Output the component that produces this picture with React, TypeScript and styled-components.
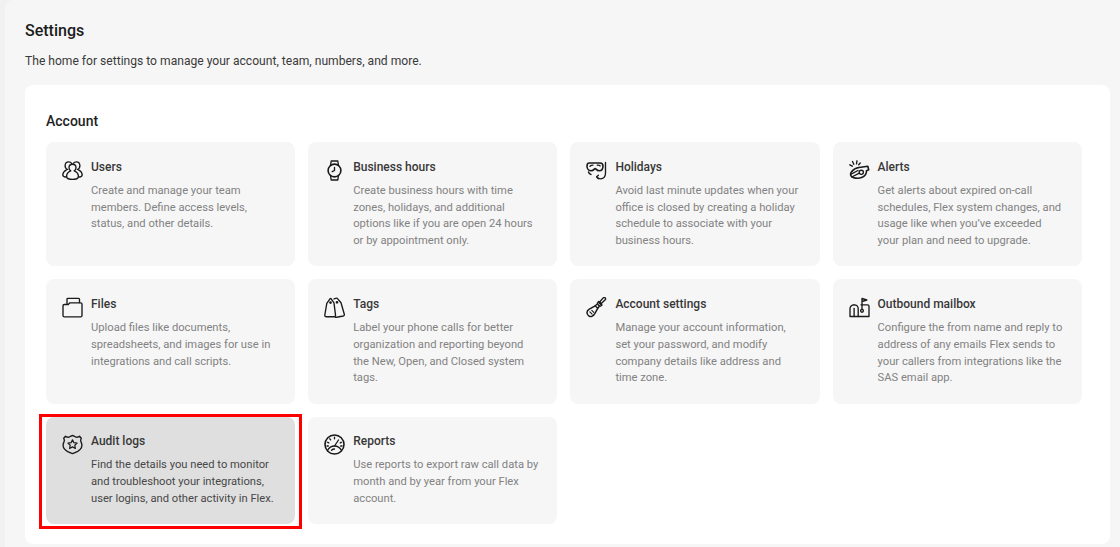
import React from "react";
import styled, { createGlobalStyle } from "styled-components";

const GlobalStyle = createGlobalStyle`
  html, body {
    margin: 0;
    padding: 0;
    background: #f1f1f1;
    overflow: hidden;
  }
  * {
    box-sizing: border-box;
  }
`;

const Panel = styled.main`
  width: 1120px;
  height: 547px;
  margin-left: 5px;
  padding: 21px 10px 0 20px;
  background: #f6f6f6;
  border-top-left-radius: 8px;
  font-family: Roboto, "Liberation Sans", sans-serif;
  overflow: hidden;
`;

const Title = styled.h1`
  margin: 0;
  font-size: 16px;
  line-height: 19px;
  font-weight: 500;
  color: #1c1c1c;
`;

const Subtitle = styled.p`
  margin: 13px 0 0;
  font-size: 12.1px;
  line-height: 17px;
  color: #3a3a3a;
`;

const Section = styled.section`
  width: 1085px;
  height: 459px;
  margin-top: 15px;
  padding: 28px 28px 0 21px;
  background: #fff;
  border-radius: 8px;
`;

const SectionTitle = styled.h2`
  margin: 0 0 12px;
  font-size: 14px;
  line-height: 17px;
  font-weight: 500;
  color: #1f1f1f;
`;

const CardGrid = styled.div`
  display: grid;
  grid-template-columns: repeat(4, 249.2px);
  grid-template-rows: 124.3px 124.3px 107px;
  column-gap: 13px;
  row-gap: 13px;
`;

const Card = styled.article<{ $selected?: boolean }>`
  position: relative;
  display: flex;
  gap: 8px;
  padding: 16.5px 16px 0;
  border-radius: 8px;
  background: ${(p) => (p.$selected ? "#dfdfdf" : "#f6f6f6")};
`;

const Highlight = styled.div`
  position: absolute;
  top: -3px;
  left: -7px;
  right: -7px;
  bottom: -5px;
  border: 3px solid #ff0000;
  pointer-events: none;
`;

const IconSlot = styled.div`
  flex: 0 0 21px;
  width: 21px;
  height: 21px;
  margin-top: 1px;
  color: #1a1a1a;
`;

const Body = styled.div`
  flex: 1;
`;

const CardTitle = styled.h3`
  margin: 0 0 7.3px;
  font-size: 12px;
  line-height: 17px;
  font-weight: 500;
  color: #383838;
`;

const CardText = styled.p<{ $selected?: boolean }>`
  margin: 0;
  font-size: 11.2px;
  line-height: 16.8px;
  white-space: nowrap;
  color: ${(p) => (p.$selected ? "#474747" : "#828282")};
`;

const Svg = styled.svg`
  display: block;
  width: 21px;
  height: 21px;
  fill: none;
  stroke: currentColor;
  stroke-width: 1.35;
  stroke-linecap: round;
  stroke-linejoin: round;
`;

const UsersIcon = () => (
  <Svg viewBox="0 0 21 21">
    <path d="M5.700 9.500C4 8.800 3 7.300 3.100 5.500 3.200 3.300 4.700 1.800 6.700 1.800c1.200 0 2.300.6 3 1.600" />
    <path d="M15.300 9.500c1.700-.7 2.700-2.200 2.600-4-.1-2.200-1.600-3.700-3.600-3.700-1.200 0-2.300.6-3 1.600" />
    <path d="M4.500 9.800C2.500 10.800 1 12.600.8 14.500c-.1 1.500.9 2.300 3 2.500" />
    <path d="M16.500 9.800c2 1 3.500 2.800 3.700 4.700.1 1.500-.9 2.300-3 2.500" />
    <path d="M10.500 4.200C8.500 4.200 7 5.700 7 7.700c0 1.300.7 2.500 1.800 3.100-2.300.9-4 2.900-4.200 5.100-.2 1.700.7 2.800 2.400 3.100 2.300.4 4.700.4 7 0 1.700-.3 2.600-1.400 2.400-3.100-.2-2.200-1.900-4.200-4.200-5.100 1.100-.6 1.800-1.800 1.800-3.100 0-2-1.500-3.500-3.500-3.500z" />
  </Svg>
);

const WatchIcon = () => (
  <Svg viewBox="0 0 21 21">
    <circle cx="10.500" cy="10.500" r="6.400" strokeWidth="1.600" />
    <path d="M6.500 5.500 7.200 1h6.600l.7 4.500" />
    <path d="M6.500 15.500l.7 4.500h6.600l.7-4.500" />
    <path d="M10.500 7.500v3l-2.300 1.200" />
  </Svg>
);

const GogglesIcon = () => (
  <Svg viewBox="0 0 21 21">
    <path d="M3.200 3h10.800c2 0 3 1.300 3 3 0 2.700-1.500 4.800-3.800 4.800-1.500 0-2.300-.7-3.200-1.700-.5-.5-1.100-.5-1.600 0-1 1-1.800 1.700-3.300 1.700C2.900 10.800 1 8.800 1 6.200 1 4.500 1.800 3 3.200 3z" strokeWidth="1.600" />
    <path d="M4 6.300c.8-.9 1.800-1.200 3-1.200M11.300 5.200c1.200-.2 2.200 0 2.900.7" />
    <path d="M19.500 2.500v10.800c0 3.200-2 5.500-4.800 5.500-1.800 0-3-.7-4-2" />
    <path d="M2.500 12c.3 1.300 1.300 2.300 2.500 2.500" />
    <path d="M10.700 16.800l1.700-1.600M10.700 16.800l1.500 1.900" />
  </Svg>
);

const WhistleIcon = () => (
  <Svg viewBox="0 0 21 21">
    <path d="M2.500 11.800c1.800-2.300 4.500-3.900 7.500-4.300l8.800-1.200.9 3.500-2.200 1c0 3-1.500 5.400-4.200 6.500-2.900 1.200-6.300 1.300-9.200.2-2.900-1.100-3.200-3.700-1.600-5.700z" strokeWidth="1.600" />
    <circle cx="12.300" cy="12.300" r="2.100" />
    <path d="M1.600 14.300l7.400-3.800M2.800 17l7.500-3.800" />
    <path d="M3.500 1.500l1.300 2.800M8 .8l-.5 3M.8 4.800l2.500 1.400M11.200 3L9.700 4.800" />
  </Svg>
);

const FolderIcon = () => (
  <Svg viewBox="0 0 21 21">
    <path d="M1 18.500V8.800c0-.8.500-1.300 1.300-1.300h3.900l1.700-1.700h10.800c.7 0 1.300.5 1.300 1.200v11.500c0 .8-.5 1.300-1.300 1.300H2.300C1.500 19.800 1 19.300 1 18.500z" />
    <path d="M5 7V2.200c0-.6.300-.9.900-.9h10.700c.6 0 .9.300.9.900v3.300" />
  </Svg>
);

const TagsIcon = () => (
  <Svg viewBox="0 0 21 21">
    <path d="M.8 18 2.800 6.300 6 1.800c.4-.4.900-.4 1.200 0l2.800 4L11.500 18.200c.1.900-.4 1.500-1.200 1.500H2.300c-1 0-1.600-.7-1.500-1.700z" />
    <path d="M10 1.800l2.500-.6c.4-.1.700 0 1 .4l3.500 4.200 3.300 11.500c.2.900-.2 1.500-1 1.700l-7.800 1.500" />
    <circle cx="6.500" cy="5.500" r=".7" />
    <circle cx="13" cy="5.300" r=".7" />
  </Svg>
);

const ScrewdriverIcon = () => (
  <Svg viewBox="0 0 21 21">
    <path d="M14.500 7.200 19.200 2.800c.7-.7.500-1.400-.1-2-.6-.5-1.200-.5-1.900.1L13 5.700z" />
    <path d="M12.500 4.500c1.500.6 2.800 1.900 3.500 3.500l-1.500 1.200C13 9 11.800 7.800 11.400 6.200z" />
    <path d="M11 7.200 9.200 8.800l2.500 2.500 1.500-1.800" />
    <path d="M9.200 8.800 3.300 12.200c-1.900 1.100-2.700 2.600-2.100 4.400.6 2 2.800 3.500 4.700 2.800 1.300-.5 2.200-1.600 2.900-2.800l2.900-5.300" strokeWidth="1.500" />
    <path d="M3.800 14.800l2.300 2.300M5.800 13.400l2 2" strokeWidth="1.100" />
  </Svg>
);

const MailboxIcon = () => (
  <Svg viewBox="0 0 21 21">
    <path d="M5 7.800C2.700 7.800 1 9.500 1 11.800v7.700h19V9.300c0-.9-.6-1.500-1.500-1.500H12" />
    <path d="M9.200 19.500v-7.700c0-2.300-1.800-4-4.200-4" />
    <path d="M5.100 11.500v8" />
    <path d="M13 12.500V1.500l4.800 1.500L13 4.500" />
    <circle cx="13" cy="13.800" r="1.400" />
  </Svg>
);

const BadgeIcon = () => (
  <Svg viewBox="0 0 21 21">
    <path d="M3.500 2.300c1.300 1.100 3.300 1.100 4.700.2C9.200 2 9.900 1.500 10.500 1.500s1.300.5 2.300 1c1.400.9 3.400.9 4.700-.2l1.800 2c-.9 1.300-.7 2.900 0 4.300 1 2.200.6 4.900-1.100 6.800-1.700 2-4.700 3.300-7.700 4.200-3-.9-6-2.200-7.700-4.200-1.700-1.900-2.100-4.600-1.100-6.800.7-1.400.9-3 0-4.300z" />
    <path d="m10.500 5.800 1.400 2.900 3.200.4-2.300 2.200.6 3.200-2.900-1.600-2.900 1.600.6-3.200-2.300-2.200 3.200-.4z" strokeWidth="1.200" />
  </Svg>
);

const GaugeIcon = () => (
  <Svg viewBox="0 0 21 21">
    <circle cx="10.500" cy="10.500" r="9.500" strokeWidth="1.600" />
    <path d="M3.500 16.500c1.500-2.800 4-4.500 7-4.500s5.500 1.700 7 4.500" />
    <path d="M10.500 12 14.500 6" />
    <path d="M10.500 3.200v1.500M5.800 4.800l.8 1.100M3.700 8.300l1.100.6M3 12h1.300M16.200 8.900l1.100-.6M16.700 12H18" />
    <path d="M7.500 16.300c.8-.8 1.900-1.300 3-1.300" />
  </Svg>
);

type CardData = {
  title: string;
  lines: string[];
  icon: React.ReactNode;
  selected?: boolean;
};

const cards: CardData[] = [
  {
    title: "Users",
    icon: <UsersIcon />,
    lines: ["Create and manage your team", "members. Define access levels,", "status, and other details."],
  },
  {
    title: "Business hours",
    icon: <WatchIcon />,
    lines: [
      "Create business hours with time",
      "zones, holidays, and additional",
      "options like if you are open 24 hours",
      "or by appointment only.",
    ],
  },
  {
    title: "Holidays",
    icon: <GogglesIcon />,
    lines: [
      "Avoid last minute updates when your",
      "office is closed by creating a holiday",
      "schedule to associate with your",
      "business hours.",
    ],
  },
  {
    title: "Alerts",
    icon: <WhistleIcon />,
    lines: [
      "Get alerts about expired on-call",
      "schedules, Flex system changes, and",
      "usage like when you’ve exceeded",
      "your plan and need to upgrade.",
    ],
  },
  {
    title: "Files",
    icon: <FolderIcon />,
    lines: ["Upload files like documents,", "spreadsheets, and images for use in", "integrations and call scripts."],
  },
  {
    title: "Tags",
    icon: <TagsIcon />,
    lines: [
      "Label your phone calls for better",
      "organization and reporting beyond",
      "the New, Open, and Closed system",
      "tags.",
    ],
  },
  {
    title: "Account settings",
    icon: <ScrewdriverIcon />,
    lines: [
      "Manage your account information,",
      "set your password, and modify",
      "company details like address and",
      "time zone.",
    ],
  },
  {
    title: "Outbound mailbox",
    icon: <MailboxIcon />,
    lines: [
      "Configure the from name and reply to",
      "address of any emails Flex sends to",
      "your callers from integrations like the",
      "SAS email app.",
    ],
  },
  {
    title: "Audit logs",
    icon: <BadgeIcon />,
    selected: true,
    lines: [
      "Find the details you need to monitor",
      "and troubleshoot your integrations,",
      "user logins, and other activity in Flex.",
    ],
  },
  {
    title: "Reports",
    icon: <GaugeIcon />,
    lines: ["Use reports to export raw call data by", "month and by year from your Flex", "account."],
  },
];

const App = () => {
  return (
    <>
      <GlobalStyle />
      <Panel>
        <Title>Settings</Title>
        <Subtitle>The home for settings to manage your account, team, numbers, and more.</Subtitle>
        <Section>
          <SectionTitle>Account</SectionTitle>
          <CardGrid>
            {cards.map((card) => (
              <Card key={card.title} $selected={card.selected}>
                <IconSlot>{card.icon}</IconSlot>
                <Body>
                  <CardTitle>{card.title}</CardTitle>
                  <CardText $selected={card.selected}>
                    {card.lines.map((line) => (
                      <React.Fragment key={line}>
                        {line}
                        <br />
                      </React.Fragment>
                    ))}
                  </CardText>
                </Body>
                {card.selected && <Highlight />}
              </Card>
            ))}
          </CardGrid>
        </Section>
      </Panel>
    </>
  );
};

export default App;
